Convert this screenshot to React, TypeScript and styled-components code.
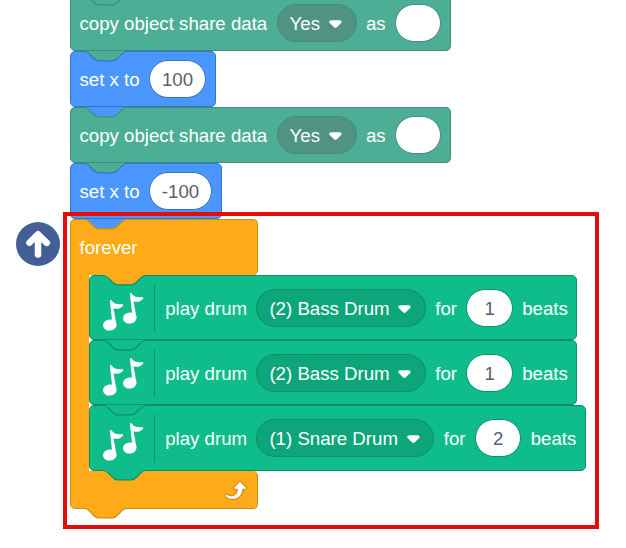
import React from "react";
import styled, { createGlobalStyle } from "styled-components";

const GlobalStyle = createGlobalStyle`
  body { margin: 0; background: #fff; }
  *, *::before, *::after { box-sizing: border-box; }
`;

type Tone = { fill: string; edge: string; field: string };

const share: Tone = { fill: "#4cae95", edge: "#418f7b", field: "#519382" };
const motion: Tone = { fill: "#4c97ff", edge: "#3373cc", field: "#4280d7" };
const control: Tone = { fill: "#ffab19", edge: "#cf8b17", field: "#ec9c13" };
const music: Tone = { fill: "#0fbd8c", edge: "#0b8e69", field: "#0da57a" };

const Workspace = styled.main`
  position: relative;
  width: 626px;
  height: 548px;
  overflow: hidden;
  background: #fff;
  font-family: "Liberation Sans", Arial, sans-serif;
  font-size: 18.67px;
  line-height: 22px;
  color: #fff;
`;

const Script = styled.div`
  display: flex;
  flex-direction: column;
  align-items: flex-start;
  padding-left: 70px;
  margin-top: -5px;
`;

const Block = styled.div<{ $tone: Tone; $tall?: boolean; $width: number }>`
  position: relative;
  display: flex;
  align-items: center;
  gap: 9.33px;
  width: ${(p) => p.$width}px;
  height: ${(p) => (p.$tall ? 65.2 : 56)}px;
  padding: ${(p) => (p.$tall ? "0 8.5px 0 13px" : "0 8.5px 1px")};
  border: 1px solid ${(p) => p.$tone.edge};
  border-radius: 5px;
  background: ${(p) => p.$tone.fill};
`;

const Label = styled.span`
  flex: none;
  padding-top: 2px;
  white-space: pre;
`;

const Dropdown = styled.span<{ $tone: Tone; $width: number }>`
  display: flex;
  flex: none;
  align-items: center;
  justify-content: space-between;
  width: ${(p) => p.$width}px;
  height: 38px;
  padding: 2px 13px 0 12px;
  border: 1px solid ${(p) => p.$tone.edge};
  border-radius: 19px;
  background: ${(p) => p.$tone.field};
  white-space: pre;
`;

const Input = styled.span<{ $tone: Tone; $width?: number }>`
  display: flex;
  flex: none;
  align-items: center;
  justify-content: center;
  width: ${(p) => p.$width ?? 46.5}px;
  height: 38px;
  padding-top: 2px;
  border: 1px solid ${(p) => p.$tone.edge};
  border-radius: 19px;
  background: #fff;
  color: #575e75;
`;

const Divider = styled.span`
  flex: none;
  width: 1px;
  height: 48px;
  margin: 0 1px;
  background: #0b8e69;
  opacity: 0.8;
`;

const NotchSvg = styled.svg<{ $bottom?: boolean }>`
  position: absolute;
  left: 13px;
  ${(p) => (p.$bottom ? "bottom: -11px;" : "top: -1px;")}
  width: 44px;
  height: 11px;
  overflow: visible;
`;

const Loop = styled.div`
  display: flex;
  flex-direction: column;
  width: 188px;
`;

const LoopHead = styled.div`
  position: relative;
  display: flex;
  align-items: center;
  height: 56px;
  padding: 0 8.5px 2px;
  border: 1px solid ${control.edge};
  border-bottom: 0;
  border-radius: 5px 5px 5px 0;
  background: ${control.fill};
`;

const LoopBody = styled.div`
  display: flex;
`;

const LoopSpine = styled.div`
  flex: none;
  width: 18.5px;
  border-left: 1px solid ${control.edge};
  background: ${control.fill};
`;

const LoopFoot = styled.div`
  position: relative;
  display: flex;
  align-items: center;
  justify-content: flex-end;
  height: 38px;
  padding: 0 9.5px 0 8.5px;
  border: 1px solid ${control.edge};
  border-top: 0;
  border-radius: 0 5px 5px 5px;
  background: ${control.fill};
`;

const Inner = styled.div`
  position: relative;
  z-index: 1;
  flex: none;
`;

const Highlight = styled.div`
  position: absolute;
  z-index: 2;
  left: 63px;
  top: 212px;
  width: 536px;
  height: 317px;
  border: 4px solid #e60b0b;
`;

const StepBadge = styled.div`
  position: absolute;
  left: 15.5px;
  top: 222px;
  width: 44px;
  height: 44px;
  border-radius: 50%;
  background: #435f95;
`;

function Notch({ fill, edge, bottom }: { fill: string; edge: string; bottom?: boolean }) {
  return (
    <NotchSvg $bottom={bottom} viewBox="0 0 44 11">
      <path
        transform="translate(0.5 0.5) scale(1.1667)"
        d="M0,-0.5 V0 c2,0 3,1 4,2 l4,4 c1,1 2,2 4,2 h12 c2,0 3,-1 4,-2 l4,-4 c1,-1 2,-2 4,-2 V-0.5 Z"
        fill={fill}
      />
      <path
        transform="translate(0.5 0.5) scale(1.1667)"
        d="M0,0 c2,0 3,1 4,2 l4,4 c1,1 2,2 4,2 h12 c2,0 3,-1 4,-2 l4,-4 c1,-1 2,-2 4,-2"
        fill="none"
        stroke={edge}
      />
    </NotchSvg>
  );
}

const CaretSvg = styled.svg`
  flex: none;
  margin-top: 1px;
`;

function Caret() {
  return (
    <CaretSvg width="14.83" height="10.2" viewBox="0 0 12.71 8.79">
      <path
        d="M6.36,7.79a1.43,1.43,0,0,1-1-.42L1.42,3.45a1.44,1.44,0,0,1,0-2c0.56-.56,9.31-0.56,9.87,0a1.44,1.44,0,0,1,0,2L7.37,7.37A1.43,1.43,0,0,1,6.36,7.79Z"
        fill="#fff"
      />
    </CaretSvg>
  );
}

const NotesSvg = styled.svg`
  flex: none;
  margin-top: 8px;
`;

function Note({ x, y }: { x: number; y: number }) {
  return (
    <g transform={`translate(${x} ${y})`}>
      <ellipse cx="6.8" cy="24.8" rx="6.8" ry="5.6" transform="rotate(-6 6.8 24.8)" />
      <path d="M6.9,0.8 C7,-0.3 8.4,-0.4 8.9,0.6 C10.6,3.4 13.6,4.3 19,4 C20.6,3.9 20.8,4.8 19.8,5.7 C17,8.7 13.6,9.3 10.5,8 L13.4,24 L10,24 L9.1,20.6 Z" />
    </g>
  );
}

function Notes() {
  return (
    <NotesSvg width="41" height="38" viewBox="0 0 41 38" fill="#fff">
      <Note x={0} y={7.2} />
      <Note x={20} y={0.2} />
    </NotesSvg>
  );
}

const RepeatSvg = styled.svg`
  flex: none;
  margin-top: 1px;
`;

function RepeatArrow() {
  return (
    <RepeatSvg width="28" height="28" viewBox="0 0 24 24">
      <path
        fill="#cf8b17"
        d="M23.3,11c-0.3,0.6-0.9,1-1.5,1h-1.6c-0.1,1.3-0.5,2.5-1.1,3.6c-0.9,1.7-2.3,3.2-4.1,4.1c-1.7,0.9-3.6,1.2-5.5,0.9c-1.8-0.3-3.5-1.1-4.9-2.3c-0.7-0.7-0.7-1.9,0-2.6c0.6-0.6,1.6-0.7,2.3-0.2H7c0.9,0.6,1.9,0.9,2.9,0.9s1.9-0.3,2.7-0.9c1.1-0.8,1.8-2.1,1.8-3.5h-1.5c-0.9,0-1.7-0.7-1.7-1.7c0-0.4,0.2-0.9,0.5-1.2l4.4-4.4c0.7-0.6,1.7-0.6,2.4,0L23,9.2C23.5,9.7,23.6,10.4,23.3,11z"
      />
      <path
        fill="#fff"
        d="M21.8,11h-2.6c0,1.5-0.3,2.9-1,4.2c-0.8,1.6-2.1,2.8-3.7,3.6c-1.5,0.8-3.3,1.1-4.9,0.8c-1.6-0.2-3.2-1-4.4-2.1c-0.4-0.3-0.4-0.9-0.1-1.2c0.3-0.4,0.9-0.4,1.2-0.1l0,0c1,0.7,2.2,1.1,3.4,1.1s2.3-0.3,3.3-1c0.9-0.6,1.6-1.5,2-2.6c0.3-0.9,0.4-1.8,0.2-2.8h-2.4c-0.4,0-0.7-0.3-0.7-0.7c0-0.2,0.1-0.3,0.2-0.4l4.4-4.4c0.3-0.3,0.7-0.3,0.9,0L22,9.8c0.3,0.3,0.4,0.6,0.3,0.9S22,11,21.8,11z"
      />
    </RepeatSvg>
  );
}

function ShareBlock({ above }: { above: Tone }) {
  return (
    <Block $tone={share} $width={381}>
      <Notch fill={above.fill} edge={share.edge} />
      <Label>copy object share data</Label>
      <Dropdown $tone={share} $width={80}>
        Yes <Caret />
      </Dropdown>
      <Label>as</Label>
      <Input $tone={share} />
    </Block>
  );
}

function SetXBlock({ value, width, field }: { value: string; width: number; field: number }) {
  return (
    <Block $tone={motion} $width={width}>
      <Notch fill={share.fill} edge={motion.edge} />
      <Label>set x to</Label>
      <Input $tone={motion} $width={field}>
        {value}
      </Input>
    </Block>
  );
}

type Drum = { name: string; beats: string; width: number; field: number };

const drums: Drum[] = [
  { name: "(2) Bass Drum", beats: "1", width: 488.5, field: 169.5 },
  { name: "(2) Bass Drum", beats: "1", width: 488.5, field: 169.5 },
  { name: "(1) Snare Drum", beats: "2", width: 497, field: 178 },
];

function DrumBlock({ drum, above, last }: { drum: Drum; above: Tone; last: boolean }) {
  return (
    <Block $tone={music} $tall $width={drum.width}>
      <Notch fill={above.fill} edge={music.edge} />
      <Notes />
      <Divider />
      <Label>play drum</Label>
      <Dropdown $tone={music} $width={drum.field}>
        {drum.name} <Caret />
      </Dropdown>
      <Label>for</Label>
      <Input $tone={music}>{drum.beats}</Input>
      <Label>beats</Label>
      {last && <Notch fill={music.fill} edge={music.edge} bottom />}
    </Block>
  );
}

export default function App() {
  return (
    <Workspace>
      <GlobalStyle />
      <Script>
        <ShareBlock above={share} />
        <SetXBlock value="100" width={146} field={57} />
        <ShareBlock above={motion} />
        <SetXBlock value="-100" width={152} field={63} />
        <Loop>
          <LoopHead>
            <Notch fill={motion.fill} edge={control.edge} />
            <Label>forever</Label>
          </LoopHead>
          <LoopBody>
            <LoopSpine />
            <Inner>
              {drums.map((drum, i) => (
                <DrumBlock
                  key={i}
                  drum={drum}
                  above={i === 0 ? control : music}
                  last={i === drums.length - 1}
                />
              ))}
            </Inner>
          </LoopBody>
          <LoopFoot>
            <RepeatArrow />
            <Notch fill={control.fill} edge={control.edge} bottom />
          </LoopFoot>
        </Loop>
      </Script>
      <StepBadge>
        <svg width="44" height="44" viewBox="0 0 44 44">
          <path
            d="M22 32.6 V13 M13.4 20.8 L22 12.3 L30.8 20.8"
            fill="none"
            stroke="#fff"
            strokeWidth="6.5"
            strokeLinecap="round"
            strokeLinejoin="round"
          />
        </svg>
      </StepBadge>
      <Highlight />
    </Workspace>
  );
}
